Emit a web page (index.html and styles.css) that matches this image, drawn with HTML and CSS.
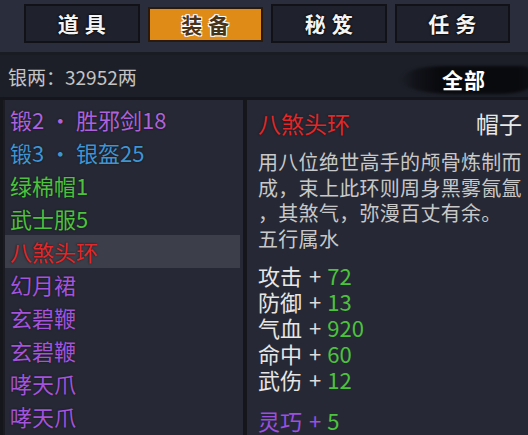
FILE: index.html
```html
<!DOCTYPE html>
<html lang="zh">
<head>
  <meta charset="UTF-8" />
  <meta name="viewport" content="width=device-width, initial-scale=1" />
  <title>装备</title>
  <link rel="stylesheet" href="styles.css">
</head>
<body>

  <div class="tabs">
    <div class="tab">道具</div>
    <div class="tab active">装备</div>
    <div class="tab">秘笈</div>
    <div class="tab">任务</div>
  </div>

  <div class="info">
    <span class="money">银两：32952两</span>
    <div class="filter">
      <span class="brush"></span>
      <span class="filter-text">全部</span>
    </div>
  </div>

  <div class="main">
    <ul class="list">
      <li class="purple">锻2 · 胜邪剑18</li>
      <li class="blue">锻3 · 银盔25</li>
      <li class="green">绿棉帽1</li>
      <li class="green">武士服5</li>
      <li class="red selected">八煞头环</li>
      <li class="violet">幻月裙</li>
      <li class="violet">玄碧鞭</li>
      <li class="violet">玄碧鞭</li>
      <li class="violet">哮天爪</li>
      <li class="violet">哮天爪</li>
    </ul>

    <div class="detail">
      <div class="detail-head">
        <span class="item-name">八煞头环</span>
        <span class="item-type">帽子</span>
      </div>
      <p class="desc">
        用八位绝世高手的颅骨炼制而<br>
        成，束上此环则周身黑雾氤氲<br>
        ，其煞气，弥漫百丈有余。<br>
        五行属水
      </p>
      <div class="stats">
        <div class="stat">攻击<span class="plus">+</span><span class="num">72</span></div>
        <div class="stat">防御<span class="plus">+</span><span class="num">13</span></div>
        <div class="stat">气血<span class="plus">+</span><span class="num">920</span></div>
        <div class="stat">命中<span class="plus">+</span><span class="num">60</span></div>
        <div class="stat">武伤<span class="plus">+</span><span class="num">12</span></div>
      </div>
      <div class="stats extra">
        <div class="stat">灵巧<span class="plus">+</span><span class="num">5</span></div>
      </div>
    </div>
  </div>

</body>
</html>
```

FILE: styles.css
```css
* {
  box-sizing: border-box;
}

body {
  margin: 0;
  padding: 0;
  width: 528px;
  height: 435px;
  overflow: hidden;
  background-color: #1d1f28;
  font-family: "Noto Sans CJK SC", "Noto Sans", sans-serif;
  color: #c8c8c8;
}

.tabs {
  display: flex;
  gap: 8px;
  height: 55px;
  padding: 4px 18px 0 24px;
  background-color: #2a2d3b;
  border-bottom: 3px solid #1a1c24;
}

.tab {
  width: 116px;
  height: 39px;
  line-height: 35px;
  text-align: center;
  font-size: 21px;
  font-weight: bold;
  letter-spacing: 6px;
  padding-left: 6px;
  color: #f4f4f4;
  background-color: #1f212c;
  border: 2px solid #111218;
  text-shadow: 0 0 2px #000, 0 0 2px #000;
}

.tab.active {
  margin-top: 3px;
  height: 35px;
  line-height: 31px;
  background-color: #df8b17;
  border-color: #2a1a0c;
  color: #4a3418;
  text-shadow: 1px 1px 0 #fff, -1px -1px 0 #fff, 1px -1px 0 #fff, -1px 1px 0 #fff;
}

.info {
  display: flex;
  align-items: center;
  justify-content: space-between;
  height: 42px;
  padding-left: 8px;
}

.money {
  font-size: 19px;
  color: #c4c4c4;
}

/* ink brush stroke behind the filter label */
.filter {
  position: relative;
  width: 128px;
  height: 30px;
  margin-top: 6px;
  text-align: center;
}

.brush {
  position: absolute;
  left: 0;
  right: -6px;
  top: 2px;
  bottom: 0;
  border-radius: 40% 10% 30% 50% / 60% 40% 50% 60%;
  background: linear-gradient(90deg, transparent 0%, rgba(8, 9, 13, 0.55) 12%, #090a0e 30%, #090a0e 88%, rgba(8, 9, 13, 0.7) 100%);
  filter: blur(1.5px);
}

.filter-text {
  position: relative;
  line-height: 30px;
  font-size: 21px;
  font-weight: bold;
  letter-spacing: 1px;
  color: #fff;
}

.main {
  display: flex;
  gap: 4px;
  height: 338px;
  padding-left: 3px;
  background-color: #15161c;
  border-top: 3px solid #15161c;
}

.list {
  list-style: none;
  margin: 0;
  padding: 3px 0 0 0;
  width: 240px;
  background-color: #262935;
  border-left: 2px solid #1b1c23;
}

.list li {
  height: 33px;
  line-height: 33px;
  padding-left: 5px;
  margin-right: 3px;
  font-size: 22px;
  white-space: nowrap;
  text-shadow: 0 0 2px #111;
}

.list li.selected {
  background-color: #3c3f4a;
}

.purple { color: #ad62dc; }
.blue { color: #3f95d4; }
.green { color: #4cc23e; }
.red { color: #e2282a; }
.violet { color: #a353dc; }

.detail {
  flex: 1;
  padding: 8px 6px 0 11px;
  background-color: #262935;
}

.detail-head {
  display: flex;
  justify-content: space-between;
  line-height: 30px;
  font-size: 23px;
}

.item-name {
  color: #e2282a;
  text-shadow: 0 0 2px #111;
}

.item-type {
  color: #e8e8e8;
}

.desc {
  margin: 11px 0 0 0;
  font-size: 20px;
  line-height: 25.5px;
  letter-spacing: 0.3px;
  color: #c8c8c8;
}

.stats {
  margin-top: 11px;
  font-size: 22px;
  color: #e6e6e6;
}

.stat {
  display: flex;
  align-items: center;
  height: 26px;
}

.plus {
  margin: 0 6px 0 7px;
  color: #dcdcdc;
}

.num {
  color: #4cc23e;
}

.stats.extra {
  margin-top: 15px;
  color: #9d4fe0;
}

.stats.extra .plus {
  color: #9d4fe0;
}
```
